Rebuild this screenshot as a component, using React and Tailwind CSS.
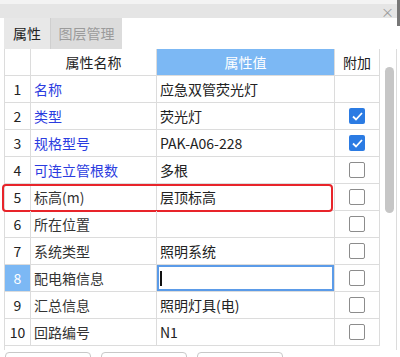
import React from "react";

const rows = [
  { no: 1, name: "名称", value: "应急双管荧光灯", link: true, checkbox: null },
  { no: 2, name: "类型", value: "荧光灯", link: true, checkbox: true },
  { no: 3, name: "规格型号", value: "PAK-A06-228", link: true, checkbox: true },
  { no: 4, name: "可连立管根数", value: "多根", link: true, checkbox: false },
  { no: 5, name: "标高(m)", value: "层顶标高", checkbox: false, marked: true },
  { no: 6, name: "所在位置", value: "", checkbox: false },
  { no: 7, name: "系统类型", value: "照明系统", checkbox: false },
  { no: 8, name: "配电箱信息", value: "", checkbox: false, editing: true },
  { no: 9, name: "汇总信息", value: "照明灯具(电)", checkbox: false },
  { no: 10, name: "回路编号", value: "N1", checkbox: false },
];

const Checkbox = ({ checked }) =>
  checked ? (
    <span className="w-[16px] h-[16px] rounded-[2px] bg-[#2b7be3] flex items-center justify-center">
      <svg width="11" height="9" viewBox="0 0 11 9" fill="none">
        <path d="M1 4.5 L4 7.5 L10 1" stroke="white" strokeWidth="1.8" />
      </svg>
    </span>
  ) : (
    <span className="w-[16px] h-[16px] rounded-[2px] border border-[#8c8c8c] bg-white" />
  );

export default function App() {
  return (
    <div
      className="w-[400px] h-[357px] bg-white overflow-hidden text-[14px] text-[#333]"
      style={{ fontFamily: '"Noto Sans CJK SC", "Noto Sans", sans-serif' }}
    >
      {/* title bar */}
      <div className="h-[18px] bg-[#e5e5e5] border-t-[4px] border-[#f3f3f3] flex justify-end items-center relative">
        <span className="text-[#9a9a9a] text-[13px] leading-none mr-[6px]">×</span>
        <span className="absolute right-0 top-[-4px] w-[3px] h-[26px] bg-[#777]" />
      </div>

      {/* tabs */}
      <div className="h-[31px] flex items-end pl-[4px] bg-white">
        <div className="h-[31px] w-[46px] bg-[#e8e8e8] flex items-center justify-center text-[#222]">属性</div>
        <div className="h-[31px] w-[72px] bg-[#dcdcdc] flex items-center justify-center text-[#9b9b9b] border-l border-[#cfcfcf]">
          图层管理
        </div>
      </div>

      {/* table */}
      <div className="flex pl-[4px]">
        <div className="border-l border-[#dcdcdc]">
          <div className="flex h-[27px] border-b border-[#dcdcdc]">
            <div className="w-[26px] border-r border-[#dcdcdc]" />
            <div className="w-[126px] border-r border-[#dcdcdc] flex items-center justify-center text-[#222]">属性名称</div>
            <div className="w-[178px] border-r border-[#dcdcdc] bg-[#7cb8f4] flex items-center justify-center text-white">属性值</div>
            <div className="w-[45px] border-r border-[#dcdcdc] flex items-center justify-center text-[#222]">附加</div>
          </div>
          {rows.map((r) => (
            <div key={r.no} className="flex h-[27px] border-b border-[#dcdcdc] relative">
              <div
                className={`w-[26px] border-r border-[#dcdcdc] flex items-center justify-center ${
                  r.editing ? "bg-[#7cb8f4] text-white" : "text-[#222]"
                }`}
              >
                {r.no}
              </div>
              <div className={`w-[126px] border-r border-[#dcdcdc] flex items-center pl-[3px] ${r.link ? "text-[#2b3ce0]" : "text-[#333]"}`}>
                {r.name}
              </div>
              {r.editing ? (
                <div className="w-[178px] border-r border-[#dcdcdc] p-0">
                  <div className="h-full border-2 border-[#5b9be8] flex items-center pl-[1px]">
                    <span className="w-[1.5px] h-[15px] bg-[#111]" />
                  </div>
                </div>
              ) : (
                <div className="w-[178px] border-r border-[#dcdcdc] flex items-center pl-[3px] text-[#222]">{r.value}</div>
              )}
              <div className="w-[45px] border-r border-[#dcdcdc] flex items-center justify-center">
                {r.checkbox !== null && <Checkbox checked={r.checkbox} />}
              </div>
              {r.marked && (
                <div className="absolute left-[-3px] top-[0px] w-[331px] h-[28px] border-2 border-[#e8242a] rounded-[4px] pointer-events-none" />
              )}
            </div>
          ))}
        </div>

        {/* scrollbar */}
        <div className="w-[17px] h-[301px] border-r border-[#dcdcdc] relative">
          <div className="absolute left-[5px] top-[18px] w-[9px] h-[146px] rounded-full bg-[#c6c6c6]" />
        </div>
      </div>

      {/* bottom buttons */}
      <div className="flex gap-[10px] pl-[5px] mt-[2px]">
        <div className="w-[86px] h-[10px] rounded-t-[4px] border border-[#c8c8c8] bg-white" />
        <div className="w-[86px] h-[10px] rounded-t-[4px] border border-[#c8c8c8] bg-white" />
        <div className="w-[86px] h-[10px] rounded-t-[4px] border border-[#c8c8c8] bg-white" />
      </div>
    </div>
  );
}
